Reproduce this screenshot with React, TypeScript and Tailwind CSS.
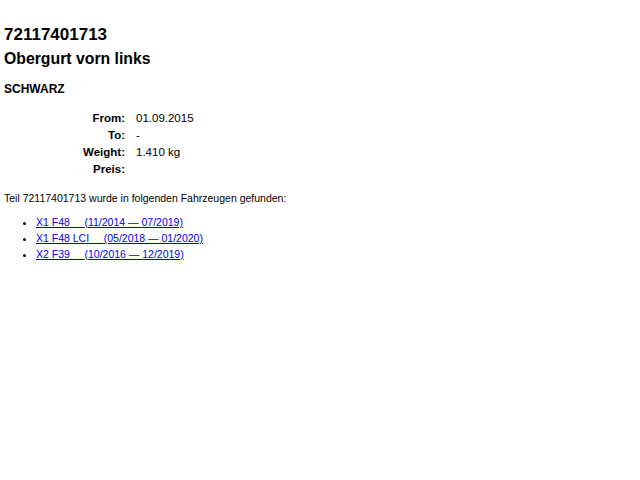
import React from 'react';

const vehicles = [
  { model: 'X1 F48', range: '(11/2014 — 07/2019)' },
  { model: 'X1 F48 LCI', range: '(05/2018 — 01/2020)' },
  { model: 'X2 F39', range: '(10/2016 — 12/2019)' },
];

const details = [
  { label: 'From:', value: '01.09.2015' },
  { label: 'To:', value: '-' },
  { label: 'Weight:', value: '1.410 kg' },
  { label: 'Preis:', value: '' },
];

export default function App() {
  return (
    <div className="min-h-[480px] bg-white px-[4px] pt-[25px] text-black font-['Liberation_Sans',Arial,sans-serif]">
      <h1 className="text-[17px] font-bold leading-[20px]">72117401713</h1>
      <h2 className="mt-[4px] text-[15.8px] font-bold leading-[20px]">Obergurt vorn links</h2>
      <h3 className="mt-[12px] text-[12px] font-bold leading-[16px]">SCHWARZ</h3>

      {/* part details */}
      <div className="mt-[13px] grid grid-cols-[121px_auto] gap-x-[11px] text-[11.5px] leading-[17px]">
        {details.map((d) => (
          <React.Fragment key={d.label}>
            <div className="text-right font-bold">{d.label}</div>
            <div>{d.value}</div>
          </React.Fragment>
        ))}
      </div>

      <p className="mt-[12px] text-[10.5px] leading-[16px]">
        Teil 72117401713 wurde in folgenden Fahrzeugen gefunden:
      </p>

      <ul className="mt-[8px] list-disc pl-[32px] text-[10.5px] leading-[16px]">
        {vehicles.map((v) => (
          <li key={v.model}>
            <a href="#" className="text-[#0000ee] underline whitespace-pre">
              {v.model}
              {'     '}
              {v.range}
            </a>
          </li>
        ))}
      </ul>
    </div>
  );
}
